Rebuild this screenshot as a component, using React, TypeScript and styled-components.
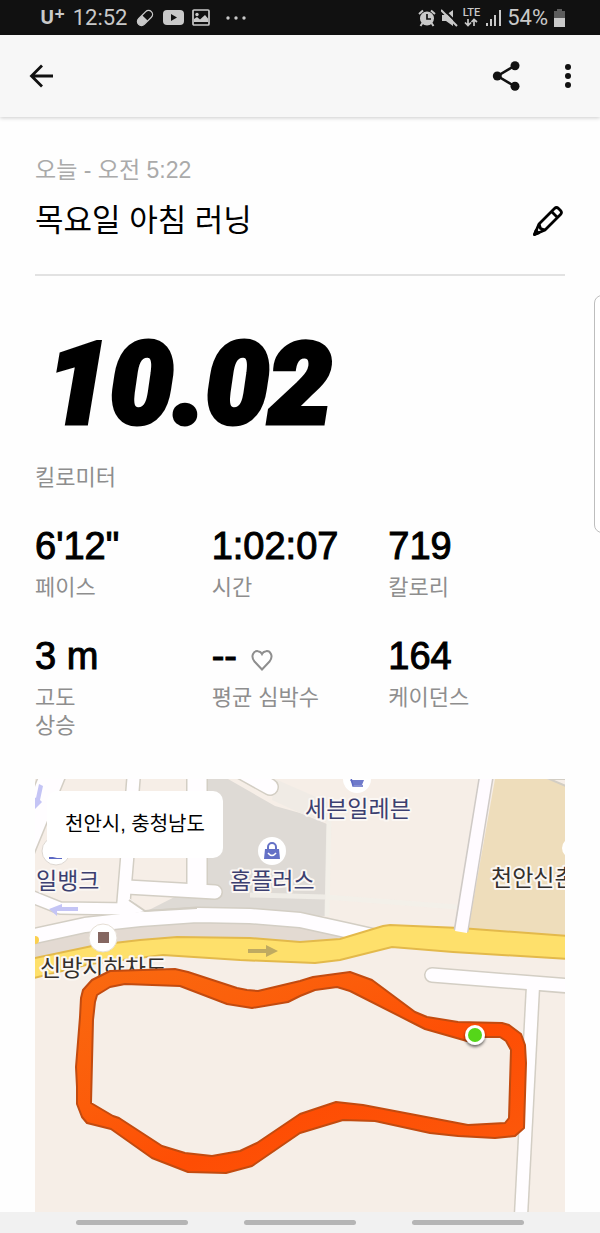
import React from "react";
import styled, { createGlobalStyle } from "styled-components";

const GlobalStyle = createGlobalStyle`
  *, *::before, *::after { box-sizing: border-box; }
  body {
    margin: 0;
    background: #fefefe;
    color: #000;
    font-family: "Liberation Sans", "Noto Sans CJK KR", sans-serif;
  }
  button { border: 0; padding: 0; background: none; color: inherit; font: inherit; cursor: pointer; }
  h1, h2, p, dl, dt, dd { margin: 0; font-weight: 400; }
  svg { display: block; }
`;

const Screen = styled.div`
  position: relative;
  display: flex;
  flex-direction: column;
  min-height: 100vh;
  overflow: hidden;
`;

const StatusBar = styled.div`
  display: flex;
  align-items: center;
  justify-content: space-between;
  height: 35px;
  padding: 0 34px 0 40px;
  background: #111;
  color: #c9c9c9;
  font-family: Roboto, sans-serif;
  font-size: 22px;
  line-height: 35px;
`;

const StatusGroup = styled.div<{ $gap: number }>`
  display: flex;
  align-items: center;
  gap: ${(p) => p.$gap}px;
`;

const Carrier = styled.span`
  display: flex;
  font-family: "Open Sans", sans-serif;
  font-weight: 700;
  font-size: 19px;
  sup {
    font-size: 18px;
    line-height: 26px;
  }
`;

const Network = styled.span`
  display: flex;
  flex-direction: column;
  align-items: center;
  font-size: 11px;
  font-weight: 500;
  line-height: 10px;
`;

const AppBar = styled.header`
  display: flex;
  align-items: center;
  height: 82px;
  padding: 0 15px 0 24px;
  background: #f7f7f7;
  box-shadow: 0 1px 4px rgba(0, 0, 0, 0.2);
`;

const IconButton = styled.button<{ $push?: boolean }>`
  display: grid;
  place-items: center;
  width: 34px;
  height: 34px;
  margin-left: ${(p) => (p.$push ? "auto" : "0")};
`;

const BarActions = styled.div`
  display: flex;
  gap: 28px;
  margin-left: auto;
`;

const Content = styled.main`
  flex: 1;
  padding: 39px 35px 0;
`;

const RunHeader = styled.section`
  padding-bottom: 31px;
  border-bottom: 2px solid #e2e2e2;
`;

const RunDate = styled.p`
  color: #aaa;
  font-size: 23px;
  line-height: 28px;
`;

const TitleRow = styled.div`
  display: flex;
  align-items: center;
  justify-content: space-between;
  margin-top: 15px;
`;

const Title = styled.h1`
  font-size: 31px;
  line-height: 44px;
`;

const Distance = styled.p`
  margin-top: 59px;
  padding-left: 12px;
  font-family: Roboto, sans-serif;
  font-size: 112px;
  font-style: italic;
  font-weight: 900;
  line-height: 100px;
  -webkit-text-stroke: 5px #000;
`;

const Label = styled.p`
  color: #8e8e8e;
  font-size: 22px;
  line-height: 28px;
`;

const DistanceLabel = styled(Label)`
  margin-top: 29px;
`;

const Stats = styled.dl`
  display: grid;
  grid-template-columns: repeat(3, 1fr);
  row-gap: 34px;
  margin-top: 34px;
`;

const Stat = styled.div`
  display: flex;
  flex-direction: column;
  gap: 8px;
`;

const StatValue = styled.dd`
  display: flex;
  align-items: center;
  gap: 14px;
  order: -1;
  font-size: 38px;
  line-height: 40px;
  white-space: pre;
  -webkit-text-stroke: 1px #000;
  svg {
    margin-top: 8px;
  }
`;

const StatLabel = styled(Label).attrs({ as: "dt" })`
  white-space: pre-line;
`;

const MapPanel = styled.section`
  position: relative;
  margin-top: 39px;
  overflow: hidden;
  background: #f6eee7;
`;

const MapDrawing = styled.svg`
  width: 100%;
  height: auto;
  font-family: "Noto Sans CJK KR", sans-serif;
  font-size: 23px;
  font-weight: 400;
`;

const PlaceCard = styled.p`
  position: absolute;
  top: 12px;
  left: 12px;
  padding: 18px;
  border-radius: 10px;
  background: #fff;
  font-size: 20px;
  line-height: 31px;
`;

const EdgePanel = styled.aside`
  position: absolute;
  top: 295px;
  right: -14px;
  width: 20px;
  height: 238px;
  border: 1px solid #bdbdbd;
  border-radius: 8px;
  background: #fff;
`;

const NavBar = styled.nav`
  display: flex;
  justify-content: center;
  align-items: center;
  gap: 56px;
  height: 21px;
  background: #f1f1f1;
`;

const NavPill = styled.button`
  width: 112px;
  height: 5px;
  border-radius: 3px;
  background: #b5b5b5;
`;

const stats = [
  { value: "6'12\"", label: "페이스" },
  { value: "1:02:07", label: "시간" },
  { value: "719", label: "칼로리" },
  { value: "3 m", label: "고도\n상승" },
  { value: "--", label: "평균 심박수", heart: true },
  { value: "164", label: "케이던스" },
];

const roads = [
  { d: "M54 772L22 850", w: 24 },
  { d: "M134 772L127 860L123 908", w: 12 },
  { d: "M197 772V887", w: 19 },
  { d: "M127 887L215 892", w: 13, round: true },
  { d: "M236 768L270 787", w: 15, round: true },
  { d: "M30 896L60 908L130 909", w: 11 },
  { d: "M30 937L85 925L140 919L197 915L250 916L300 920L350 931L390 940", w: 14 },
];

const sideRoads = [
  { d: "M432 975L570 986", w: 13, round: true },
  { d: "M533 986L521 1216", w: 12 },
];

const route =
  "M83 990L92 980L110 971L175 969L188 972L237 988L247 990L258 991L300 981L313 977L350 972L372 980L415 1012L427 1017L458 1022L502 1023L509 1025L521 1034L525 1045L526 1063L524 1128L515 1136L495 1138L458 1136L430 1133L375 1121L343 1120L300 1133L252 1166L226 1173L188 1172L152 1158L111 1129L87 1123L82 1117L77 1104L77 1087L76 1067L80 1017L81 998Z" +
  "M97 995L110 987L125 984L180 986L227 1004L252 1008L288 1002L300 996L315 990L337 987L350 991L417 1025L425 1029L467 1041L480 1037L500 1037L506 1041L511 1050L509 1118L505 1123L468 1125L363 1105L336 1102L300 1114L257 1143L240 1151L212 1156L185 1153L162 1146L119 1118L113 1116L91 1103L93 1020L95 1002Z";

type Road = { d: string; w: number; round?: boolean };

function Roads({ items }: { items: Road[] }) {
  return (
    <g fill="none" strokeLinejoin="round">
      {items.map((r) => (
        <path key={r.d} d={r.d} stroke="#d3cec4" strokeWidth={r.w + 3} strokeLinecap={r.round ? "round" : "butt"} />
      ))}
      {items.map((r) => (
        <path key={r.d} d={r.d} stroke="#fffdff" strokeWidth={r.w} strokeLinecap={r.round ? "round" : "butt"} />
      ))}
    </g>
  );
}

function RunMap() {
  return (
    <MapDrawing viewBox="35 779 530 433" role="img" aria-label="러닝 경로 지도">
      <defs>
        <linearGradient id="routeFill" x1="0" y1="0" x2="1" y2="1">
          <stop offset="0" stopColor="#f96a10" />
          <stop offset="0.35" stopColor="#fc5c0a" />
          <stop offset="0.6" stopColor="#fe4d04" />
          <stop offset="1" stopColor="#fb5a0c" />
        </linearGradient>
        <filter id="pinShadow" x="-50%" y="-50%" width="200%" height="200%">
          <feDropShadow dx="0" dy="2" stdDeviation="1.5" floodOpacity="0.6" />
        </filter>
      </defs>
      <path d="M208 779H228L275 806L300 813L327 824L325 916L145 912L208 880Z" fill="#dedad5" />
      <path d="M275 779L330 803V824L300 813L272 800Z" fill="#f0ebe5" />
      <path d="M329 815L327 916M250 895L325 897L457 907" fill="none" stroke="#f3f0ea" strokeWidth="5" opacity="0.8" />
      <path d="M495 779H547L565 785V938L468 930Z" fill="#eeddbb" />
      <path d="M547 778L566 786V779Z" fill="#f6eee7" stroke="#d3cec4" strokeWidth="2" />
      <path d="M35 943L97 931L180 922L260 922L360 936L300 943L177 938L97 946L35 959Z" fill="#e3dad2" />
      <Roads items={roads} />
      <path d="M118 898H129L145 911L120 916Z" fill="#fffdff" />
      <path d="M129 900L145 911L197 908" fill="none" stroke="#d3cec4" strokeWidth="2" />
      <path
        d="M30 959L97 945L140 940L177 937L250 938L300 942L340 939L383 926L390 925L460 928L570 936V959L453 952L392 947L340 960L315 963L240 960L163 955L90 964L30 979Z"
        fill="#fee06b"
        stroke="#e3b94b"
        strokeWidth="2"
      />
      <path d="M487 772L461 931" stroke="#cfcac6" strokeWidth="15" />
      <path d="M487 772L461 932" stroke="#fffbff" strokeWidth="12" />
      <Roads items={sideRoads} />
      <circle cx="35" cy="940" r="4" fill="#fbd04f" />

      <path d="M248 949H266V945L278 951L266 957V953H248Z" fill="#bfaa61" />
      <path d="M78 907H62V904L49 909L57 916V911H78Z" fill="#c4c4f5" />
      <path d="M39 784L43 786L40 800L42 802L34 810V797L36 798Z" fill="#c4c4f5" />

      <circle cx="357" cy="779" r="14" fill="#fff" />
      <path d="M350 780H364L362 785H353Z" fill="#6f7acb" />
      <path d="M348 777L351 778L353 786H363" fill="none" stroke="#5d69c4" strokeWidth="1.500" />
      <circle cx="272" cy="851" r="14" fill="#fff" />
      <path d="M265 849H279L280 859H264Z" fill="#6471c6" />
      <path d="M268 850V847A4 4 0 0 1 276 847V850" fill="none" stroke="#6471c6" strokeWidth="2" />
      <path d="M268 853Q272 858 276 853" fill="none" stroke="#fff" strokeWidth="1.5" />
      <circle cx="56" cy="851" r="14" fill="#fff" stroke="#ded8d2" />
      <path d="M49 857H62V859H49Z" fill="#5d69c4" />
      <circle cx="103" cy="938" r="14" fill="#fff" stroke="#e6dfd5" />
      <path d="M98 932H109V943H98Z" fill="#856761" />
      <circle cx="572" cy="848" r="10" fill="#fff" />

      <g stroke="#fbf7f3" strokeWidth="4" strokeLinejoin="round" paintOrder="stroke">
        <g fill="#3c3f70">
          <text x="305" y="817">세븐일레븐</text>
          <text x="230" y="889">홈플러스</text>
          <text x="36" y="889">일뱅크</text>
        </g>
        <g fill="#332f2c">
          <text x="491" y="886">천안신촌</text>
          <text x="40" y="976">신방지하차도</text>
        </g>
      </g>

      <path d={route} fill="url(#routeFill)" fillRule="evenodd" stroke="#c24b10" strokeWidth="2" strokeLinejoin="round" />
      <circle cx="475" cy="1035" r="10" fill="#fff" filter="url(#pinShadow)" />
      <circle cx="475" cy="1035" r="7" fill="#55d619" />
    </MapDrawing>
  );
}

function StatusLeft() {
  return (
    <StatusGroup $gap={8}>
      <Carrier>
        U<sup>+</sup>
      </Carrier>
      <span>12:52</span>
      <svg width="20" height="20" viewBox="0 0 20 20">
        <g transform="rotate(-45 10 10)">
          <rect x="1" y="6" width="18" height="8" rx="4" fill="none" stroke="#c9c9c9" strokeWidth="1.3" />
          <path d="M10 6H5A4 4 0 0 0 5 14H10Z" fill="#c9c9c9" />
        </g>
      </svg>
      <svg width="21" height="15" viewBox="0 0 21 15">
        <rect width="21" height="15" rx="4" fill="#c9c9c9" />
        <path d="M8 4L14 7.500L8 11Z" fill="#111" />
      </svg>
      <svg width="18" height="17" viewBox="0 0 18 17">
        <rect x="1" y="1" width="16" height="15" rx="1" fill="none" stroke="#c9c9c9" strokeWidth="1.700" />
        <circle cx="5" cy="5.500" r="1.700" fill="#c9c9c9" />
        <path d="M2 13V10L5 8L8 10.500L13 6L16 9.500V13Z" fill="#c9c9c9" />
      </svg>
      <svg width="34" height="4" viewBox="0 0 34 4" fill="#c9c9c9">
        <circle cx="10" cy="2" r="1.700" />
        <circle cx="18" cy="2" r="1.700" />
        <circle cx="26" cy="2" r="1.700" />
      </svg>
    </StatusGroup>
  );
}

function StatusRight() {
  return (
    <StatusGroup $gap={5}>
      <svg width="18" height="18" viewBox="0 0 18 18">
        <path d="M1 5L5 1.500M17 5L13 1.500" stroke="#c9c9c9" strokeWidth="2" />
        <circle cx="9" cy="9.500" r="7" fill="#c9c9c9" />
        <path d="M4.500 14L2.500 17M13.500 14L15.500 17" stroke="#c9c9c9" strokeWidth="2" />
        <path d="M9 5V10H13" fill="none" stroke="#111" strokeWidth="1.700" />
      </svg>
      <svg width="17" height="18" viewBox="0 0 17 18">
        <path d="M1 6H5L12 1V17L5 12H1Z" fill="#c9c9c9" />
        <path d="M2 0L17 15" stroke="#111" strokeWidth="2" />
        <path d="M0 1L16 17" stroke="#c9c9c9" strokeWidth="2" />
      </svg>
      <Network>
        LTE
        <svg width="14" height="9" viewBox="0 0 14 9" fill="none" stroke="#c9c9c9" strokeWidth="1.700">
          <path d="M4 1V7M1 4.500L4 7.500L7 4.500M10 8V2M7.500 4L10 1.500L13 4" />
        </svg>
      </Network>
      <svg width="17" height="17" viewBox="0 0 17 17" fill="#c9c9c9">
        <path d="M1 14H3V17H1ZM5 10H7V17H5ZM9 6H11V17H9ZM14 1H16V17H14Z" />
      </svg>
      <span>54%</span>
      <svg width="13" height="18" viewBox="0 0 13 18">
        <path d="M4 0H9V2H12V9H1V2H4Z" fill="#5c5c5c" />
        <path d="M1 9H12V18H1Z" fill="#c9c9c9" />
      </svg>
    </StatusGroup>
  );
}

export default function App() {
  return (
    <Screen>
      <GlobalStyle />
      <StatusBar>
        <StatusLeft />
        <StatusRight />
      </StatusBar>
      <AppBar>
        <IconButton aria-label="뒤로">
          <svg width="26" height="26" viewBox="0 0 26 26" fill="none" stroke="#111" strokeWidth="2.800">
            <path d="M25 13H3.500M14 2.500L3.500 13L14 23.500" />
          </svg>
        </IconButton>
        <BarActions>
          <IconButton aria-label="공유">
            <svg width="28" height="30" viewBox="0 0 28 30" fill="#111">
              <path d="M23 4.500L5.500 15L23 25.500" fill="none" stroke="#111" strokeWidth="2.500" />
              <circle cx="23" cy="4.700" r="4.500" />
              <circle cx="5.300" cy="15" r="4.500" />
              <circle cx="23" cy="25.300" r="4.500" />
            </svg>
          </IconButton>
          <IconButton aria-label="더보기">
            <svg width="8" height="26" viewBox="0 0 8 26" fill="#111">
              <circle cx="4" cy="4" r="3" />
              <circle cx="4" cy="13" r="3" />
              <circle cx="4" cy="22" r="3" />
            </svg>
          </IconButton>
        </BarActions>
      </AppBar>
      <Content>
        <RunHeader>
          <RunDate>오늘 - 오전 5:22</RunDate>
          <TitleRow>
            <Title>목요일 아침 러닝</Title>
            <IconButton aria-label="제목 수정" $push>
              <svg width="32" height="32" viewBox="0 0 32 32" fill="none" stroke="#000" strokeWidth="2.800" strokeLinejoin="round">
                <path d="M2.500 29.500L7 19L22.500 3.500Q24.500 1.500 26.500 3.500L28.500 5.500Q30.500 7.500 28.500 9.500L13 25Z" />
                <path d="M19.500 6.500L25.500 12.500M7 19L8.500 23.500L13 25" />
                <path d="M2.500 29.500L4 25.500L6.500 28Z" fill="#000" />
              </svg>
            </IconButton>
          </TitleRow>
        </RunHeader>
        <Distance>10.02</Distance>
        <DistanceLabel>킬로미터</DistanceLabel>
        <Stats>
          {stats.map((s) => (
            <Stat key={s.label}>
              <StatLabel>{s.label}</StatLabel>
              <StatValue>
                {s.value}
                {s.heart && (
                  <svg width="22" height="22" viewBox="0 0 22 22" fill="none" stroke="#8e8e8e" strokeWidth="2">
                    <path d="M11 20.500L3.500 12.500C-1 7 3 1.500 7 2.200C9 2.500 10.300 3.500 11 5C11.700 3.500 13 2.500 15 2.200C19 1.500 23 7 18.500 12.500Z" />
                  </svg>
                )}
              </StatValue>
            </Stat>
          ))}
        </Stats>
        <MapPanel>
          <RunMap />
          <PlaceCard>천안시, 충청남도</PlaceCard>
        </MapPanel>
      </Content>
      <EdgePanel />
      <NavBar>
        <NavPill aria-label="최근 앱" />
        <NavPill aria-label="홈" />
        <NavPill aria-label="뒤로 가기" />
      </NavBar>
    </Screen>
  );
}
